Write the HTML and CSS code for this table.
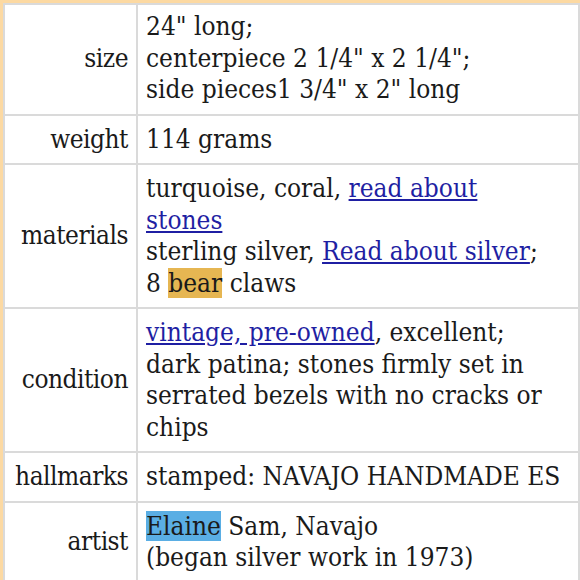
FILE: index.html
```html
<!DOCTYPE html>
<html>
<head>
<meta charset="utf-8">
<link rel="stylesheet" href="styles.css">
</head>
<body>
<table class="details">
  <tr class="first">
    <th class="label">size</th>
    <td class="value">24" long;<br>centerpiece 2 1/4" x 2 1/4";<br>side pieces1 3/4" x 2" long</td>
  </tr>
  <tr>
    <th class="label">weight</th>
    <td class="value">114 grams</td>
  </tr>
  <tr>
    <th class="label">materials</th>
    <td class="value">turquoise, coral, <a href="#">read about<br>stones</a><br>sterling silver, <a href="#">Read about silver</a>;<br>8 <span class="hl-gold">bear</span> claws</td>
  </tr>
  <tr>
    <th class="label">condition</th>
    <td class="value"><a href="#">vintage, pre-owned</a>, excellent;<br>dark patina; stones firmly set in<br>serrated bezels with no cracks or<br>chips</td>
  </tr>
  <tr>
    <th class="label">hallmarks</th>
    <td class="value">stamped: NAVAJO HANDMADE ES</td>
  </tr>
  <tr>
    <th class="label">artist</th>
    <td class="value"><span class="hl-blue">Elaine</span> Sam, Navajo<br>(began silver work in 1973)</td>
  </tr>
</table>
</body>
</html>
```
FILE: styles.css
```css
html, body {
  margin: 0;
  padding: 0;
}
body {
  background: #fcd9a2;
  padding: 3px 0 0 3px;
}
.details {
  border-collapse: collapse;
  table-layout: fixed;
  background: #fff;
  width: 577px;
  font-family: "DejaVu Serif Condensed", "DejaVu Serif", "Liberation Serif", serif;
  font-stretch: semi-condensed;
  font-size: 26px;
  line-height: 31.5px;
  color: #1a1a1a;
}
.details th, .details td {
  border: 2px solid #dadada;
  padding: 8px;
}
.details .first > th, .details .first > td {
  padding-top: 6px;
}
.label {
  font-weight: normal;
  text-align: right;
  vertical-align: middle;
  width: 115px;
  padding-left: 0;
  padding-right: 10px;
  letter-spacing: -0.5px;
  white-space: nowrap;
}
.value {
  text-align: left;
  vertical-align: middle;
  white-space: nowrap;
}
.value a {
  color: #1f1fa3;
  text-decoration: underline;
}
.hl-gold {
  background: #e6b652;
}
.hl-blue {
  background: #5aaee4;
}
```
